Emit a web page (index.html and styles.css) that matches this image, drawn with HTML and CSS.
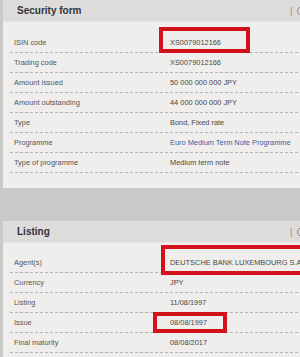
FILE: index.html
```html
<!DOCTYPE html>
<html lang="en">
<head>
<meta charset="utf-8">
<title>Security form</title>
<link rel="stylesheet" href="styles.css">
</head>
<body>
<main class="page">
  <section class="panel panel-security">
    <header class="panel-head">
      <h2 class="panel-title">Security form</h2>
      <span class="tools"><span class="bar">|</span><span class="ico"></span></span>
    </header>
    <div class="panel-body">
      <div class="row"><span class="label">ISIN code</span><span class="value">XS0079012166</span></div>
      <div class="row"><span class="label">Trading code</span><span class="value">XS0079012166</span></div>
      <div class="row"><span class="label">Amount issued</span><span class="value">50 000 000 000 JPY</span></div>
      <div class="row"><span class="label">Amount outstanding</span><span class="value">44 000 000 000 JPY</span></div>
      <div class="row"><span class="label">Type</span><span class="value">Bond, Fixed rate</span></div>
      <div class="row"><span class="label">Programme</span><span class="value link">Euro Medium Term Note Programme</span></div>
      <div class="row"><span class="label">Type of programme</span><span class="value">Medium term note</span></div>
    </div>
    <div class="mark mark-isin"></div>
  </section>

  <section class="panel panel-listing">
    <header class="panel-head">
      <h2 class="panel-title">Listing</h2>
      <span class="tools"><span class="bar">|</span><span class="ico"></span></span>
    </header>
    <div class="panel-body">
      <div class="row"><span class="label">Agent(s)</span><span class="value">DEUTSCHE BANK LUXEMBOURG S.A.</span></div>
      <div class="row"><span class="label">Currency</span><span class="value">JPY</span></div>
      <div class="row"><span class="label">Listing</span><span class="value">11/08/1997</span></div>
      <div class="row"><span class="label">Issue</span><span class="value">08/08/1997</span></div>
      <div class="row"><span class="label">Final maturity</span><span class="value">08/08/2017</span></div>
    </div>
    <div class="mark mark-agent"></div>
    <div class="mark mark-issue"></div>
  </section>
</main>
</body>
</html>
```
FILE: styles.css
```css
html, body {
  margin: 0;
  padding: 0;
  width: 300px;
  height: 357px;
  overflow: hidden;
  background: #c9c9c7;
  font-family: "Liberation Sans", Arial, sans-serif;
}

.page {
  display: flex;
  flex-direction: column;
  gap: 33px;
  padding-left: 3px;
}

.panel {
  position: relative;
  width: 310px;
  background: #efeeec;
}

.panel-head {
  display: flex;
  align-items: center;
  height: 22px;
  padding-left: 14px;
  background: #dddcda;
  border-bottom: 1px solid #e6e5e3;
  box-sizing: border-box;
}

.panel-title {
  margin: 0;
  font-size: 10px;
  font-weight: bold;
  color: #333338;
}

.tools {
  margin-left: auto;
  display: flex;
  align-items: center;
  gap: 5px;
  width: 23px;
  color: #8a8a8a;
  font-size: 9px;
}

.ico {
  width: 8px;
  height: 8px;
  border: 1px solid #8a8a8a;
  border-radius: 50%;
}

.panel-body {
  padding: 11px 0 15px 7px;
}

.panel-listing .panel-body {
  padding-top: 10px;
  padding-bottom: 4px;
}

.row {
  display: grid;
  grid-template-columns: 156px 1fr;
  align-items: center;
  height: 19px;
  padding-left: 4px;
  border-bottom: 1px dashed #b4b4b2;
  font-size: 7.4px;
  white-space: nowrap;
}

.label {
  color: #555555;
}

.value {
  color: #474747;
}

.value.link {
  color: #3b5da6;
}

.mark {
  position: absolute;
  border: 4px solid #d3121b;
  box-sizing: border-box;
}

.mark-isin {
  left: 156px;
  top: 27px;
  width: 91px;
  height: 26px;
}

.mark-agent {
  left: 158px;
  top: 24px;
  width: 150px;
  height: 30px;
}

.mark-issue {
  left: 150px;
  top: 91px;
  width: 74px;
  height: 21px;
}
```
